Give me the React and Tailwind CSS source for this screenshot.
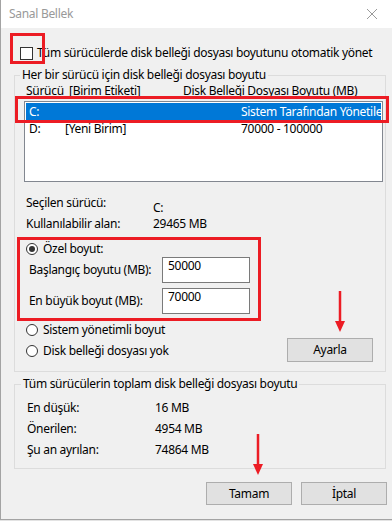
const Radio = ({ checked }) => (
  <span className="flex h-[12px] w-[12px] shrink-0 items-center justify-center rounded-full border border-[#333] bg-white">
    {checked && <span className="h-[6px] w-[6px] rounded-full bg-[#333]" />}
  </span>
);

const Button = ({ children, className = "" }) => (
  <button className={`flex h-[23px] w-[86px] items-center justify-center border border-[#adadad] bg-[#e1e1e1] text-black ${className}`}>
    {children}
  </button>
);

const Arrow = ({ className }) => (
  <svg className={`absolute ${className}`} width="12" height="42" viewBox="0 0 12 42">
    <line x1="6" y1="0" x2="6" y2="33" stroke="#ec1c24" strokeWidth="2.5" />
    <polygon points="1,30 11,30 6,41" fill="#ec1c24" />
  </svg>
);

const drives = [
  { letter: "C:", label: "", size: "Sistem Tarafından Yönetilen", selected: true },
  { letter: "D:", label: "[Yeni Birim]", size: "70000 - 100000", selected: false },
];

const totals = [
  ["En düşük:", "16 MB"],
  ["Önerilen:", "4954 MB"],
  ["Şu an ayrılan:", "74864 MB"],
];

export default function App() {
  return (
    <div className="relative h-[521px] w-[392px] overflow-hidden bg-[#e3e3e3] font-['Noto_Sans',sans-serif] text-[12px] leading-[16px] tracking-[-0.3px] text-black">
      <div className="h-[520px] border-b border-l border-[#a3a3a3] bg-[#f0f0f0]">
        {/* Title bar */}
        <div className="flex h-[28px] items-center justify-between bg-white pl-[8px] pr-[15px] text-[#999]">
          <span>Sanal Bellek</span>
          <svg width="10" height="10" viewBox="0 0 10 10">
            <path d="M0 0 L10 10 M10 0 L0 10" stroke="#9a9a9a" strokeWidth="1" />
          </svg>
        </div>

        {/* Auto manage */}
        <div className="mt-[17px] flex h-[16px] items-center pl-[19px]">
          <span className="h-[13px] w-[13px] border border-[#333] bg-white" />
          <span className="ml-[4px] whitespace-nowrap">Tüm sürücülerde disk belleği dosyası boyutunu otomatik yönet</span>
        </div>

        {/* Per drive */}
        <fieldset className="ml-[13px] mt-[6px] w-[372px] border border-[#dcdcdc]">
          <legend className="ml-[5px] px-[2px]">Her bir sürücü için disk belleği dosyası boyutu</legend>
          <div className="pb-[9px] pl-[9px]">
            <div className="flex h-[16px] items-center whitespace-nowrap">
              <span className="w-[45px] pl-[2px]">Sürücü</span>
              <span className="w-[114px]">[Birim Etiketi]</span>
              <span>Disk Belleği Dosyası Boyutu (MB)</span>
            </div>
            <div className="mt-[2px] h-[81px] w-[359px] border border-[#828790] bg-white p-[1px]">
              {drives.map((d) => (
                <div
                  key={d.letter}
                  className={`flex h-[17px] items-center overflow-hidden whitespace-nowrap pl-[3px] ${d.selected ? "bg-[#0078d7] text-white" : ""}`}
                >
                  <span className="w-[36px] shrink-0">{d.letter}</span>
                  <span className="w-[176px] shrink-0">{d.label}</span>
                  <span>{d.size}</span>
                </div>
              ))}
            </div>

            <div className="mt-[13px] flex h-[21px] items-start pl-[2px]">
              <span className="w-[127px]">Seçilen sürücü:</span>
              <span className="pt-[5px]">C:</span>
            </div>
            <div className="flex h-[16px] items-center pl-[2px]">
              <span className="w-[127px]">Kullanılabilir alan:</span>
              <span>29465 MB</span>
            </div>

            <div className="mt-[9px] flex h-[16px] items-center gap-[5px] pl-[2px]">
              <Radio checked />
              <span>Özel boyut:</span>
            </div>
            <div className="flex h-[26px] items-center pl-[5px]">
              <span className="w-[133px]">Başlangıç boyutu (MB):</span>
              <div className="h-[26px] w-[88px] border border-[#7a7a7a] bg-white pl-[5px]">50000</div>
            </div>
            <div className="mt-[5px] flex h-[26px] items-center pl-[5px]">
              <span className="w-[133px]">En büyük boyut (MB):</span>
              <div className="h-[26px] w-[88px] border border-[#7a7a7a] bg-white pl-[5px]">70000</div>
            </div>

            <div className="mt-[8px] flex items-start justify-between">
              <div className="flex flex-col gap-[5px] pl-[2px]">
                <div className="flex h-[16px] items-center gap-[5px]">
                  <Radio />
                  <span>Sistem yönetimli boyut</span>
                </div>
                <div className="flex h-[16px] items-center gap-[5px]">
                  <Radio />
                  <span>Disk belleği dosyası yok</span>
                </div>
              </div>
              <Button className="mr-[12px] mt-[16px] h-[24px]">Ayarla</Button>
            </div>
          </div>
        </fieldset>

        {/* Totals */}
        <fieldset className="ml-[13px] mt-[4px] w-[372px] border border-[#dcdcdc]">
          <legend className="ml-[6px] px-[2px]">Tüm sürücülerin toplam disk belleği dosyası boyutu</legend>
          <div className="pb-[8px] pl-[12px] pt-[5px]">
            {totals.map(([label, value]) => (
              <div key={label} className="flex h-[21px] items-center">
                <span className="w-[128px]">{label}</span>
                <span>{value}</span>
              </div>
            ))}
          </div>
        </fieldset>

        <div className="mt-[13px] flex justify-end gap-[9px] pr-[5px]">
          <Button>Tamam</Button>
          <Button>İptal</Button>
        </div>
      </div>

      {/* Annotations */}
      <div className="absolute left-[10px] top-[33px] h-[31px] w-[35px] border-[3px] border-[#ec1c24]" />
      <div className="absolute left-[15px] top-[96px] h-[27px] w-[374px] border-[3px] border-[#ec1c24]" />
      <div className="absolute left-[17px] top-[237px] h-[84px] w-[244px] border-[3px] border-[#ec1c24]" />
      <Arrow className="left-[334px] top-[291px]" />
      <Arrow className="left-[252px] top-[434px]" />
    </div>
  );
}
